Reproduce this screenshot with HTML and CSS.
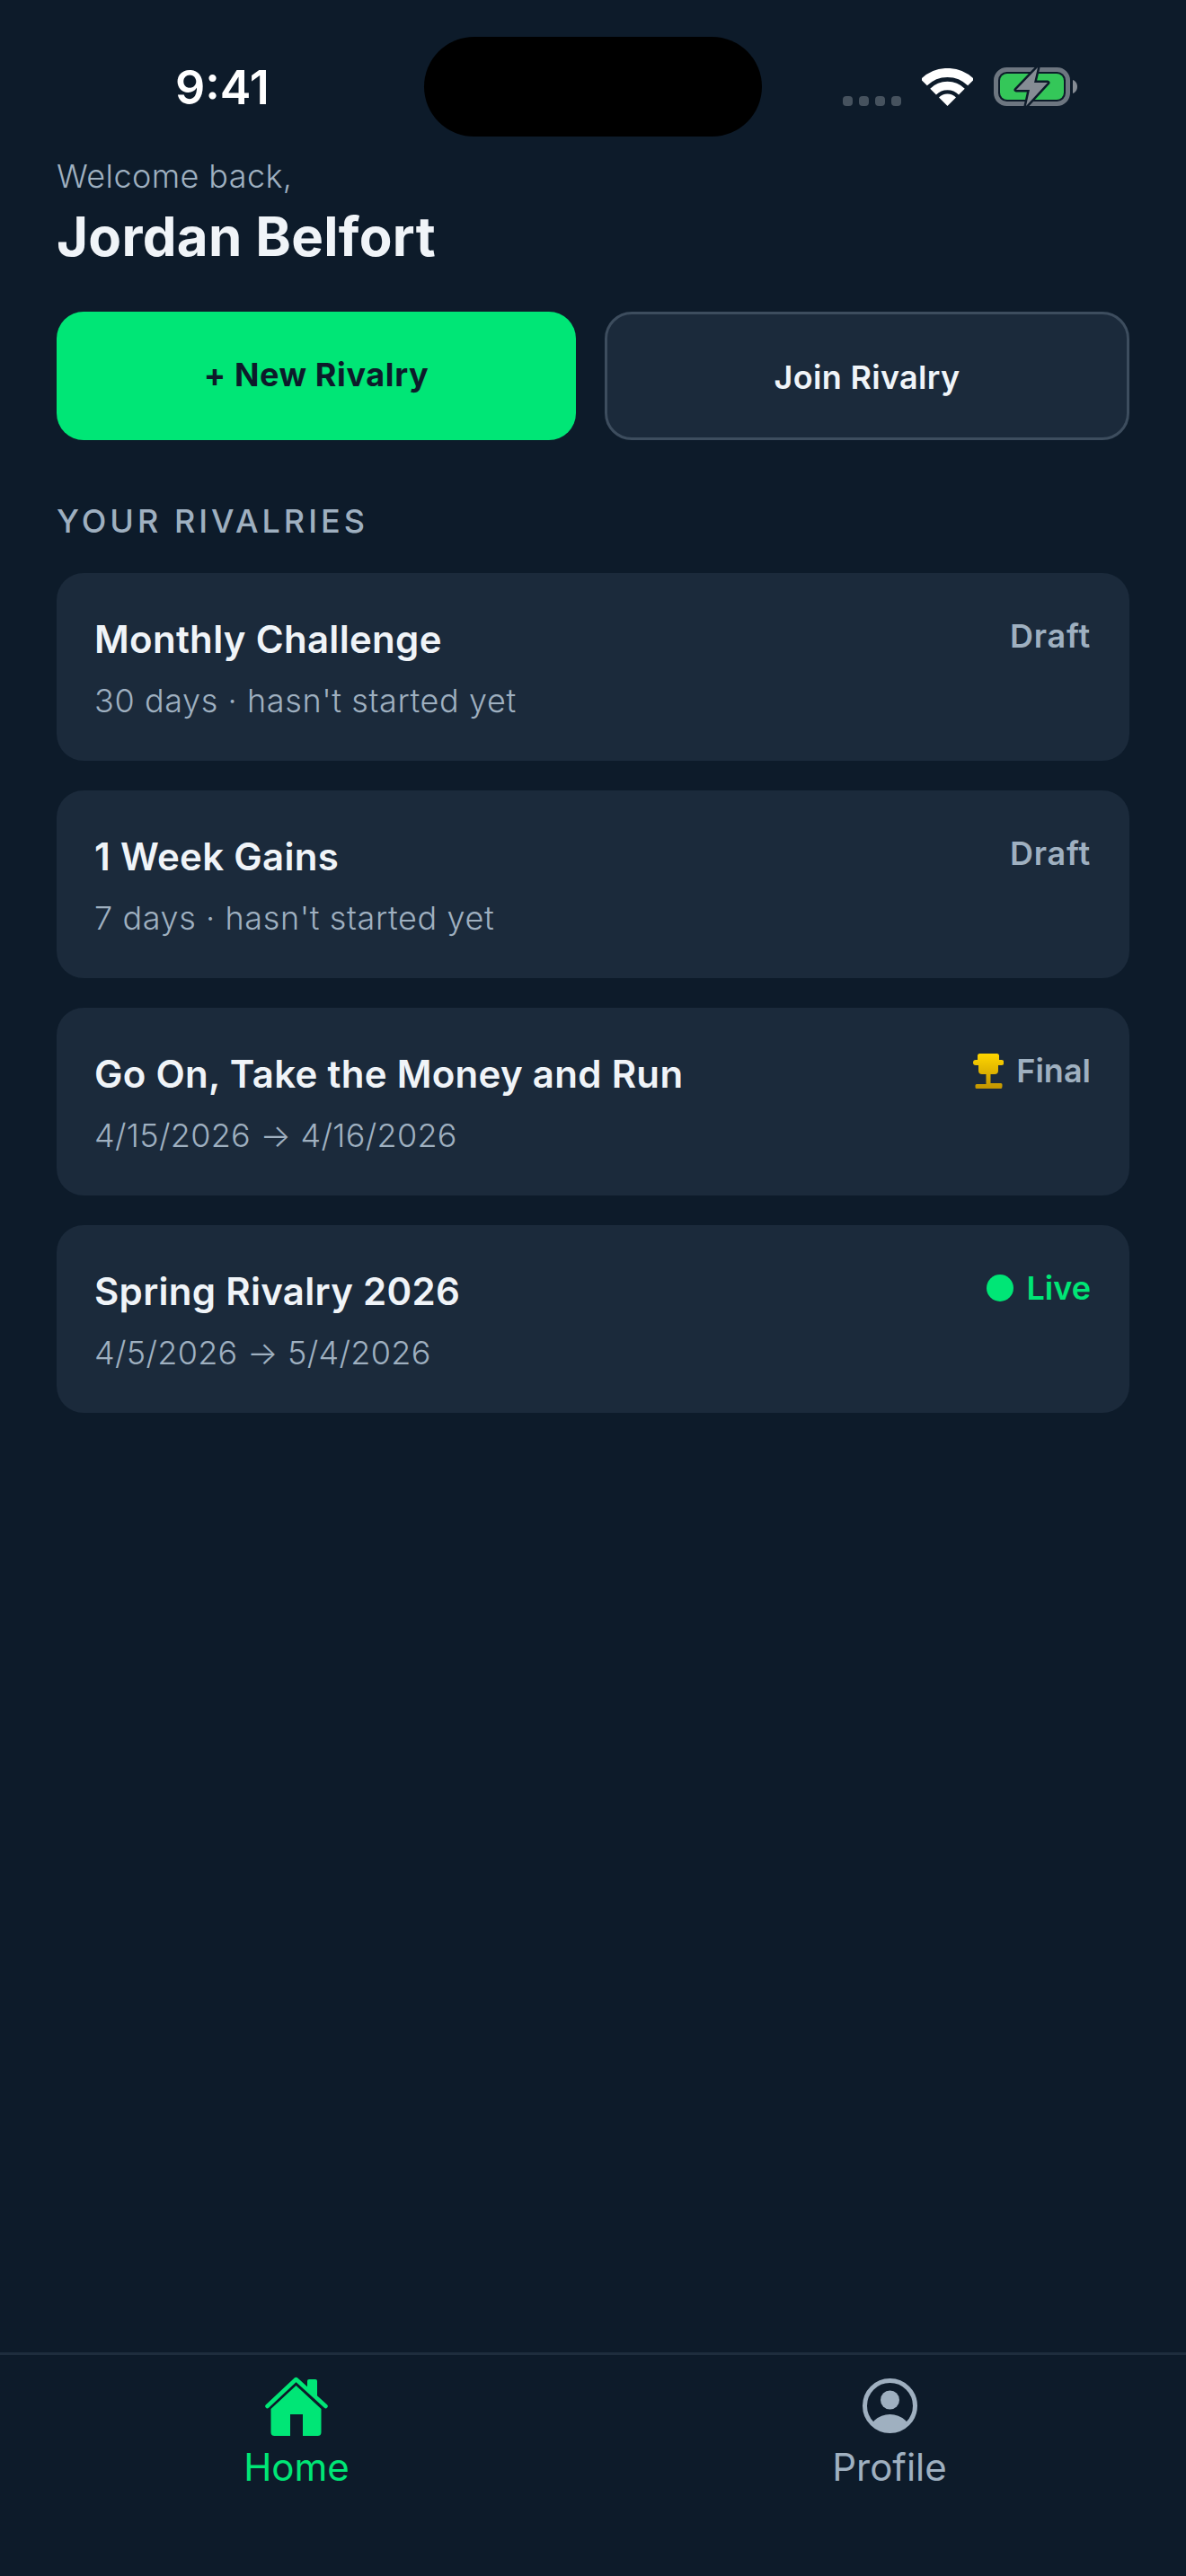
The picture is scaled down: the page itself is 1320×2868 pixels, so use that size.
FILE: index.html
```html
<!DOCTYPE html>
<html lang="en">
<head>
<meta charset="utf-8">
<title>Rivalries</title>
<link rel="stylesheet" href="styles.css">
</head>
<body>
<div class="screen">
  <header class="status">
    <span class="time">9:41</span>
    <span class="island"></span>
    <div class="status-icons">
      <span class="dots"><i></i><i></i><i></i><i></i></span>
      <svg class="wifi" width="57" height="42" viewBox="0 0 57 42"><g fill="none" stroke="#fff"><path stroke-width="10" d="M2.3 15.8A37 37 0 0 1 54.7 15.8"/><path stroke-width="9.5" d="M12.6 26.1A22.5 22.5 0 0 1 44.4 26.1"/></g><path fill="#fff" d="M19 32.5A13.5 13.5 0 0 1 38 32.5L28.5 42Z"/></svg>
      <svg class="battery" width="93" height="45" viewBox="0 -1 93 45"><rect x="2.5" y="2.5" width="80" height="38" rx="12" fill="none" stroke="#6d7680" stroke-width="5"/><path fill="#858c94" d="M88 14c3 1 5 4 5 7.500s-2 6.500-5 7.500z"/><rect x="7" y="7" width="71" height="29" rx="8" fill="#34c759"/><path fill="#858c94" stroke="#0d1b2a" stroke-width="5" stroke-linejoin="round" paint-order="stroke" d="M49 0 25 25h15l-4 18 24-26H45z"/></svg>
    </div>
  </header>

  <main class="content">
    <p class="welcome">Welcome back,</p>
    <h1 class="name">Jordan Belfort</h1>
    <div class="actions">
      <button class="btn btn-primary">+ New Rivalry</button>
      <button class="btn btn-secondary">Join Rivalry</button>
    </div>
    <h2 class="section">YOUR RIVALRIES</h2>
    <ul class="cards">
      <li class="card">
        <div><h3 class="title">Monthly Challenge</h3><p class="meta">30 days · hasn't started yet</p></div>
        <span class="badge badge-draft">Draft</span>
      </li>
      <li class="card">
        <div><h3 class="title">1 Week Gains</h3><p class="meta">7 days · hasn't started yet</p></div>
        <span class="badge badge-draft">Draft</span>
      </li>
      <li class="card">
        <div><h3 class="title">Go On, Take the Money and Run</h3><p class="meta meta-date">4/15/2026 → 4/16/2026</p></div>
        <span class="badge">
          <svg class="trophy" width="34" height="39" viewBox="0 0 34 39"><defs><linearGradient id="gold" x1="0" y1="0" x2="0" y2="1"><stop offset="0" stop-color="#ffd600"/><stop offset="1" stop-color="#c29500"/></linearGradient></defs><path fill="url(#gold)" d="M5 2.500Q5 0 7.500 0h19Q29 0 29 2.500V7h2.500a3 3 0 0 1 0 6H28v6q0 4-4 4h-4.500v10H31q1.500 0 1.500 1.500v2Q32.500 39 31 39H4q-1.500 0-1.500-1.500v-2Q2.500 34 4 34h10.500V23H10q-4 0-4-4v-6H3a3 3 0 0 1 0-6h2z"/></svg>
          Final
        </span>
      </li>
      <li class="card">
        <div><h3 class="title">Spring Rivalry 2026</h3><p class="meta meta-date">4/5/2026 → 5/4/2026</p></div>
        <span class="badge badge-live"><i class="live-dot"></i>Live</span>
      </li>
    </ul>
  </main>

  <nav class="tabs">
    <a class="tab tab-active">
      <svg class="tab-icon" width="70" height="66" viewBox="0 0 70 66"><path fill="#00e676" d="M47 14V5q0-2 2-2h7q2 0 2 2v20z"/><path fill="none" stroke="#00e676" stroke-width="4.500" stroke-linecap="round" stroke-linejoin="round" d="M2.500 33 34.500 3 67.500 33"/><path fill="#00e676" d="M34.500 10 62.500 36v26q0 4-4 4H42V42H28v24H10.500q-4 0-4-4V36z"/></svg>
      <span>Home</span>
    </a>
    <a class="tab">
      <svg class="tab-icon" width="61" height="66" viewBox="0 0 61 66"><defs><clipPath id="disc"><circle cx="30.500" cy="32.500" r="29"/></clipPath></defs><circle cx="30.500" cy="32.500" r="28" fill="none" stroke="#9fb0c0" stroke-width="5"/><circle cx="30.500" cy="26" r="10.500" fill="#9fb0c0"/><ellipse cx="30.500" cy="64" rx="24" ry="22" fill="#9fb0c0" clip-path="url(#disc)"/></svg>
      <span>Profile</span>
    </a>
  </nav>
</div>
</body>
</html>
```

FILE: styles.css
```css
* { box-sizing: border-box; margin: 0; padding: 0; }
html, body { background: #0d1b2a; }
body { font-family: Inter, "Liberation Sans", sans-serif; color: #f0f4f8; }
.screen { width: 1320px; height: 2868px; display: flex; flex-direction: column; background: #0d1b2a; overflow: hidden; }

.status { position: relative; height: 176px; flex: none; }
.time { position: absolute; left: 195px; top: 65px; font-size: 52px; line-height: 66px; font-weight: 600; color: #fff; }
.island { position: absolute; left: 472px; top: 41px; width: 376px; height: 111px; border-radius: 56px; background: #000; }
.status-icons { position: absolute; left: 938px; top: 74px; display: flex; align-items: flex-end; }
.dots { display: flex; gap: 7px; margin-bottom: 1px; }
.dots i { display: block; width: 11px; height: 11px; border-radius: 4px; background: #46525e; }
.wifi { margin-left: 23px; margin-bottom: 1px; }
.battery { margin-left: 23px; }

.content { flex: 1; padding: 0 63px; }
.welcome { font-size: 36px; line-height: 40px; font-weight: 300; color: #9fb0c0; letter-spacing: 0.4px; }
.name { font-size: 60px; line-height: 72px; font-weight: 700; margin-top: 11px; letter-spacing: 0.3px; color: #f0f4f8; }
.actions { display: flex; gap: 32px; margin-top: 48px; }
.btn { flex: 1 1 0; height: 143px; display: block; text-align: center; font-family: Inter, sans-serif; font-size: 36px; line-height: 48px; font-weight: 600; border-radius: 30px; align-self: flex-start; }
.btn-primary { background: #00e676; color: #0d1b2a; border: 0; font-weight: 700; letter-spacing: 0.6px; padding-bottom: 3px; }
.btn-secondary { background: #1b2a3b; color: #f0f4f8; border: 3px solid #3d4d5e; letter-spacing: 0.3px; padding-top: 3px; }
.section { margin-top: 67px; font-size: 36px; line-height: 46px; font-weight: 500; letter-spacing: 4px; color: #9fb0c0; }
.cards { list-style: none; margin-top: 35px; display: flex; flex-direction: column; gap: 33px; }
.card { height: 209px; padding: 47px 43px 0 42px; border-radius: 30px; background: #1b2a3b; display: flex; justify-content: space-between; align-items: flex-start; }
.title { font-size: 42px; line-height: 54px; font-weight: 600; letter-spacing: 0.3px; color: #f0f4f8; }
.meta { margin-top: 19px; font-size: 36px; line-height: 44px; font-weight: 300; letter-spacing: 0.6px; color: #9fb0c0; }
.meta-date { letter-spacing: 0.3px; }
.badge { display: flex; align-items: center; gap: 14px; margin-top: -1px; font-size: 36px; line-height: 48px; font-weight: 600; color: #9fb0c0; }
.badge-draft { letter-spacing: 0.8px; }
.badge-live { color: #00e676; }
.live-dot { width: 30px; height: 30px; border-radius: 50%; background: #00e676; }

.tabs { flex: none; height: 249px; border-top: 3px solid #1e2d3d; display: flex; }
.tab { flex: 1; display: flex; flex-direction: column; align-items: center; padding-top: 24px; font-size: 42px; line-height: 51px; color: #9fb0c0; }
.tab-active { color: #00e676; }
.tab-icon { display: block; }
.tab span { margin-top: 9px; }
```
